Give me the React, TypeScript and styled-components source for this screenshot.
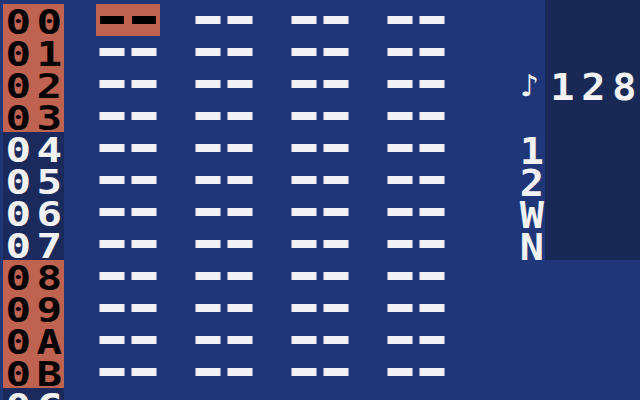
import React from 'react';
import styled, { createGlobalStyle } from 'styled-components';

const GlobalStyle = createGlobalStyle`
  html, body {
    margin: 0;
    padding: 0;
    background: #1f3678;
    overflow: hidden;
  }
`;

const Screen = styled.div`
  display: flex;
  width: 640px;
  height: 400px;
  overflow: hidden;
  font-family: 'DejaVu Sans Mono', 'Liberation Mono', monospace;
  font-weight: bold;
  color: #f2f2f4;
`;

const Tracker = styled.div`
  display: flex;
  flex-direction: column;
  width: 516px;
  padding-top: 4px;
`;

const Row = styled.div`
  display: flex;
  height: 32px;
  flex-shrink: 0;
`;

const LineNumber = styled.div<{ $alt: boolean }>`
  display: flex;
  width: 61px;
  margin-left: 3px;
  background: ${({ $alt }) => ($alt ? '#1a2a5c' : '#c06250')};
  color: ${({ $alt }) => ($alt ? '#f2f2f4' : '#000')};
`;

const Glyph = styled.span`
  display: inline-block;
  width: 32px;
  text-align: center;
  font-size: 34px;
  line-height: 32px;
  transform: translateY(2px) scaleX(1.25);
`;

const Columns = styled.div`
  display: flex;
  gap: 32px;
  padding-left: 32px;
`;

const Cell = styled.div<{ $cursor?: boolean }>`
  display: flex;
  align-items: center;
  gap: 8px;
  width: 64px;
  padding: 0 4px;
  box-sizing: border-box;
  background: ${({ $cursor }) => ($cursor ? '#c06250' : 'transparent')};
`;

const Dash = styled.span<{ $dark?: boolean }>`
  display: block;
  width: 24px;
  height: 8px;
  background: ${({ $dark }) => ($dark ? '#000' : '#f2f2f4')};
  box-shadow: ${({ $dark }) =>
    $dark ? 'none' : '-1px 0 0 #8a98c4, 1px 0 0 #8a98c4'};
`;

const Side = styled.div`
  display: flex;
  flex-direction: column;
  width: 124px;
  height: 260px;
  padding-top: 4px;
  box-sizing: border-box;
  background: linear-gradient(to right, transparent 29px, #182955 29px);
`;

const SideLine = styled.div`
  display: flex;
  height: 32px;
  flex-shrink: 0;
`;

const SideGlyph = styled(Glyph)`
  font-size: 35px;
  transform: translateY(3px) scale(1.15, 1.05);
`;

const Note = styled(Glyph)`
  font-family: 'DejaVu Sans', sans-serif;
  font-size: 30px;
  transform: translate(-2px, 2px);
`;

const hex = (n: number) => n.toString(16).toUpperCase().padStart(2, '0');

const rows = Array.from({ length: 13 }, (_, i) => i);

const sideLines: string[] = ['', '', '♪128', '', '1', '2', 'W', 'N'];

const App: React.FC = () => {
  return (
    <>
      <GlobalStyle />
      <Screen>
        <Tracker>
          {rows.map((i) => (
            <Row key={i}>
              <LineNumber $alt={Math.floor(i / 4) % 2 === 1}>
                {hex(i)
                  .split('')
                  .map((c, k) => (
                    <Glyph key={k}>{c}</Glyph>
                  ))}
              </LineNumber>
              <Columns>
                {[0, 1, 2, 3].map((c) => {
                  const cursor = i === 0 && c === 0;
                  return (
                    <Cell key={c} $cursor={cursor}>
                      <Dash $dark={cursor} />
                      <Dash $dark={cursor} />
                    </Cell>
                  );
                })}
              </Columns>
            </Row>
          ))}
        </Tracker>
        <Side>
          {sideLines.map((line, i) => (
            <SideLine key={i}>
              {line.split('').map((c, k) =>
                c === '♪' ? <Note key={k}>{c}</Note> : <SideGlyph key={k}>{c}</SideGlyph>
              )}
            </SideLine>
          ))}
        </Side>
      </Screen>
    </>
  );
};

export default App;
